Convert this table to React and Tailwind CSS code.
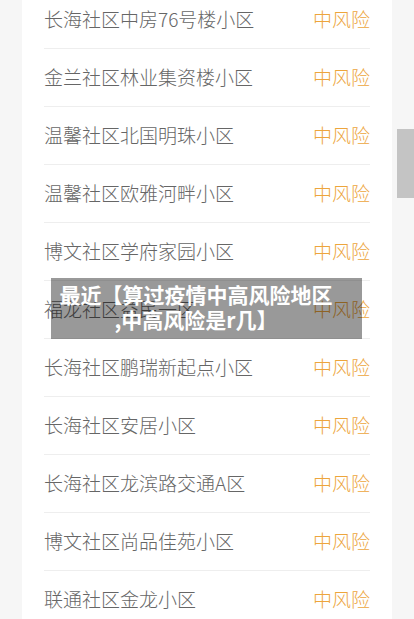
import React from "react";

const rows = [
  "长海社区中房76号楼小区",
  "金兰社区林业集资楼小区",
  "温馨社区北国明珠小区",
  "温馨社区欧雅河畔小区",
  "博文社区学府家园小区",
  "福龙社区益民一区",
  "长海社区鹏瑞新起点小区",
  "长海社区安居小区",
  "长海社区龙滨路交通A区",
  "博文社区尚品佳苑小区",
  "联通社区金龙小区",
];

export default function App() {
  return (
    <div
      className="relative h-[619px] w-[414px] overflow-hidden bg-[#f6f6f6]"
      style={{ fontFamily: '"Noto Sans CJK SC", "Noto Sans", sans-serif' }}
    >
      <div className="mt-[-9px] ml-[22px] w-[370px] bg-white px-[22px]">
        {rows.map((r, i) => (
          <div
            key={i}
            className="flex h-[58px] items-center justify-between border-b border-[#eeeeee] text-[19px]"
          >
            <span className="font-light text-[#666666]">{r}</span>
            <span className="font-light text-[#eda53c]">中风险</span>
          </div>
        ))}
      </div>
      <div className="absolute right-0 top-[129px] h-[69px] w-[17px] bg-[#c4c4c4]" />
      <div className="absolute left-[51px] top-[278px] flex h-[61px] w-[311px] flex-col items-center justify-start bg-[rgba(0,0,0,0.4)] pt-[4px] pr-[21px] text-center text-[21px] font-bold leading-[25px] text-white">
        <div className="whitespace-nowrap">最近【算过疫情中高风险地区</div>
        <div className="whitespace-nowrap">,中高风险是r几】</div>
      </div>
    </div>
  );
}
